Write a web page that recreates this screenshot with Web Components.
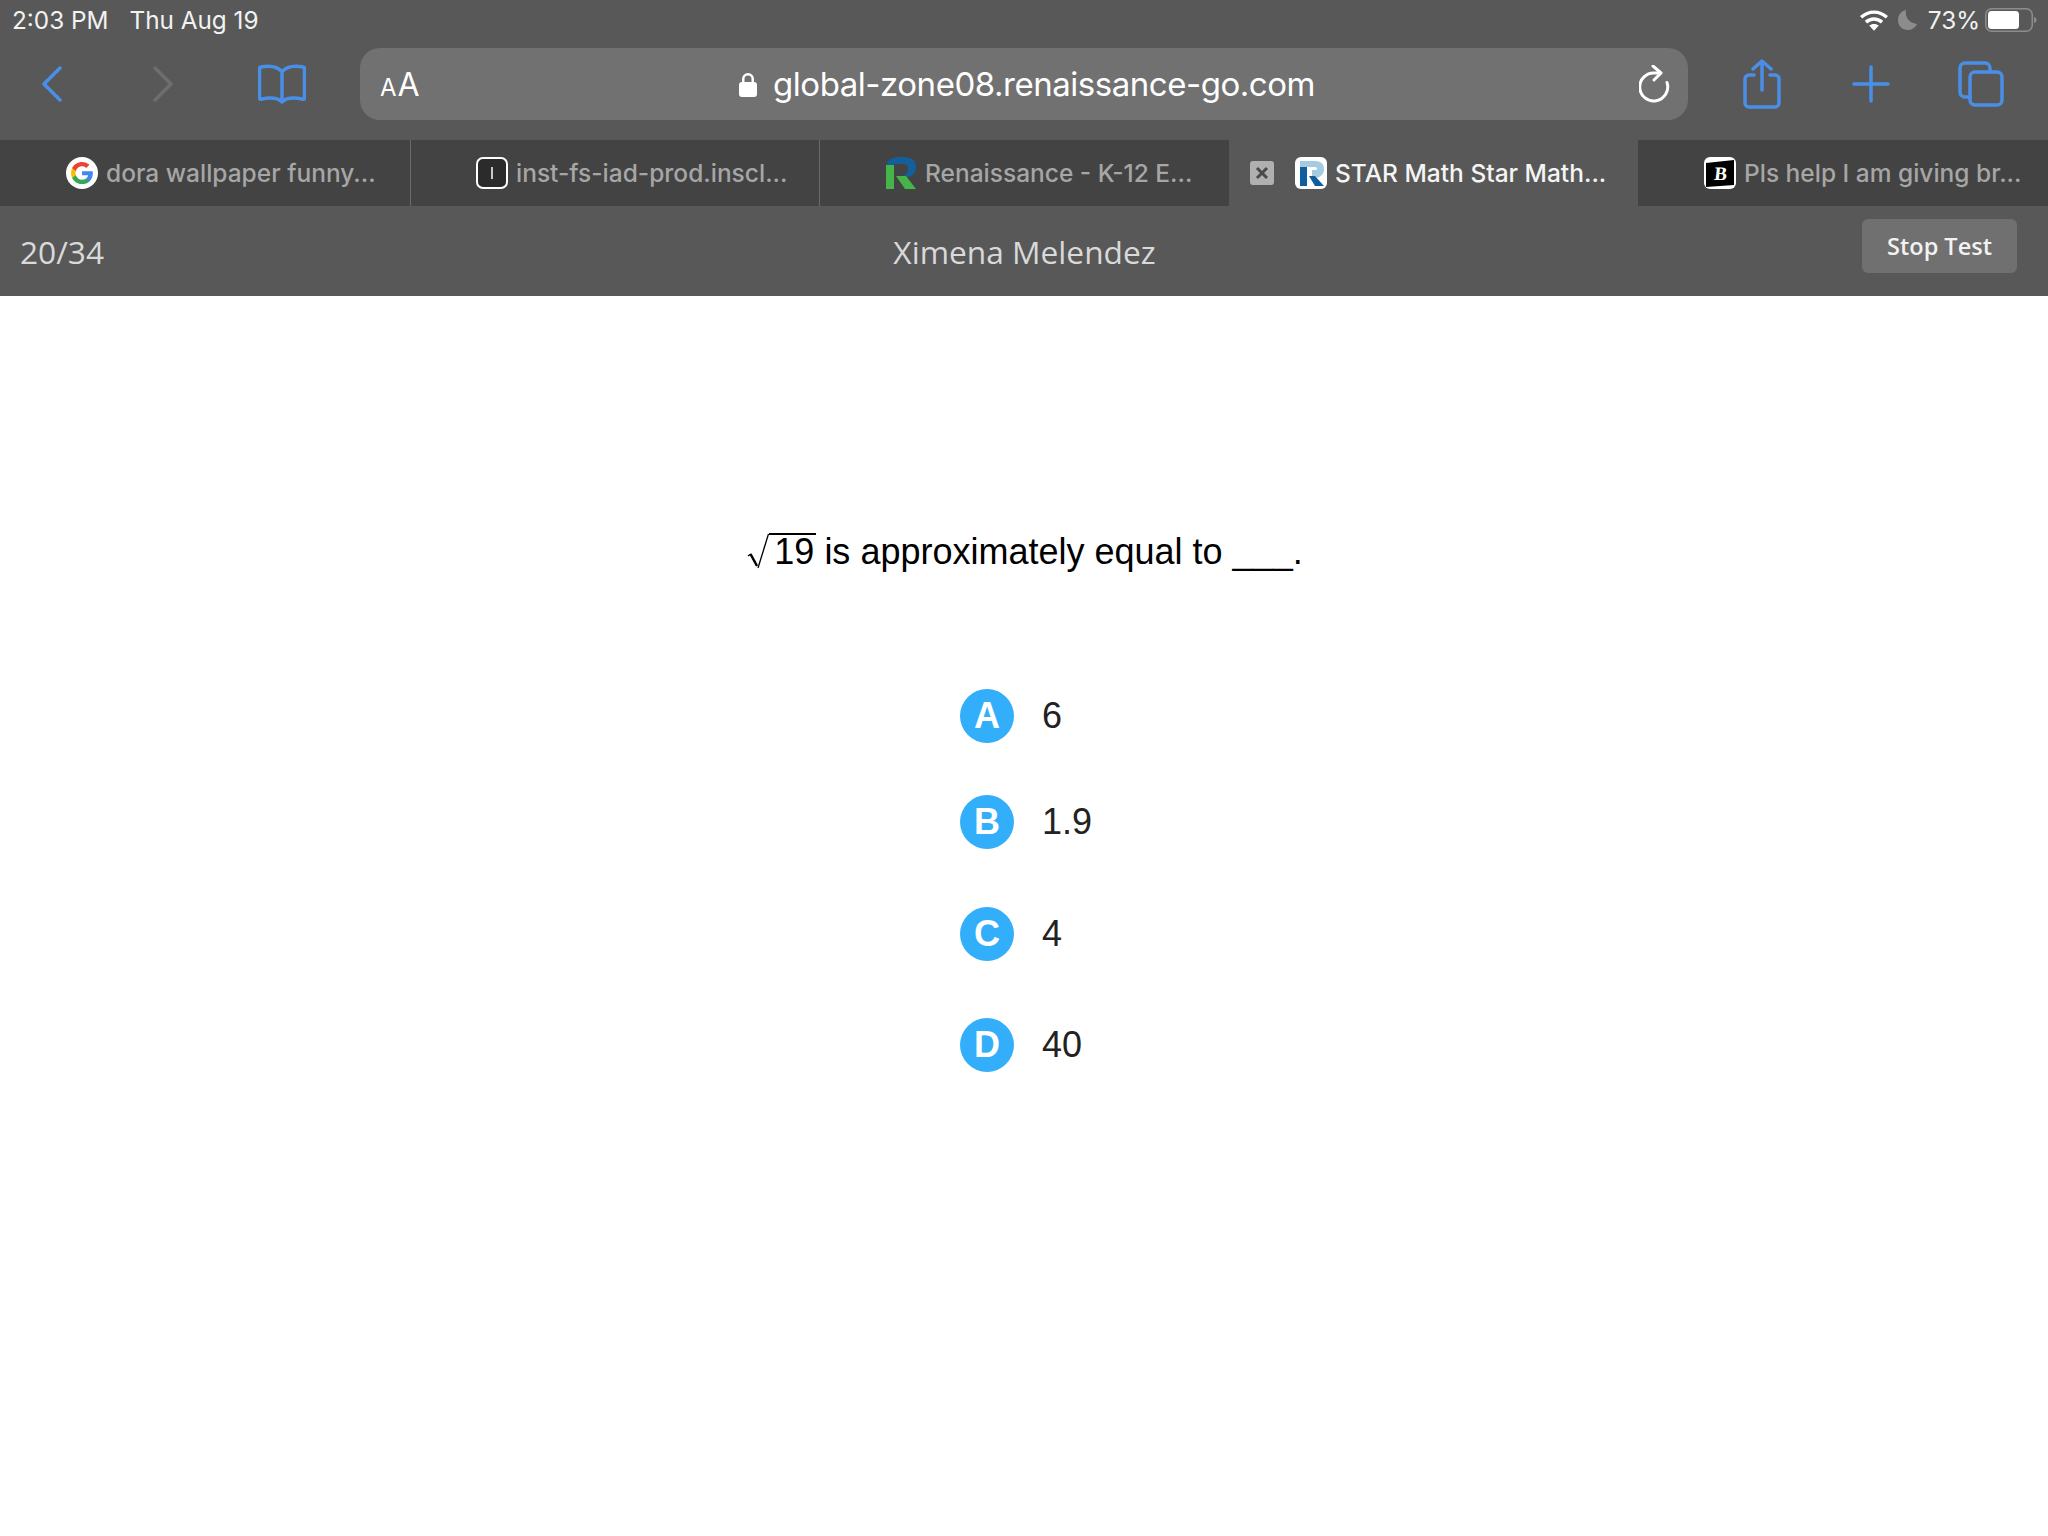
<!DOCTYPE html>
<html>
<head>
<meta charset="utf-8">
<title>Star Math</title>
<style>
    html, body { margin: 0; padding: 0; background: #fff; }
    body { width: 2048px; height: 1536px; overflow: hidden; font-family: "Liberation Sans", sans-serif; }
    .fav { width: 32px; height: 32px; display: block; }
</style>
</head>
<body>
<test-page>
    <status-bar slot="chrome" time="2:03 PM" date="Thu Aug 19" battery="73%"></status-bar>
    <browser-toolbar slot="chrome" url="global-zone08.renaissance-go.com"></browser-toolbar>
    <tab-strip slot="chrome">
        <tab-item label="dora wallpaper funny..." divider>
            <svg class="fav" viewBox="0 0 32 32"><circle cx="16" cy="16" r="16" fill="#fff"/><g transform="translate(5 5) scale(.46)"><path fill="#4285F4" d="M47.5 24.6c0-1.6-.1-3.1-.4-4.6H24v9h13.2c-.6 3-2.3 5.6-4.9 7.3v6h7.9c4.6-4.3 7.3-10.6 7.3-17.7z"/><path fill="#34A853" d="M24 48c6.5 0 11.9-2.1 15.9-5.800l-7.900-6c-2.200 1.500-5 2.300-8 2.300-6.300 0-11.600-4.200-13.500-9.900H2.400v6.200C6.300 42.600 14.500 48 24 48z"/><path fill="#FBBC05" d="M10.500 28.600c-.5-1.500-.8-3-.8-4.600s.3-3.100.8-4.600v-6.200H2.400C.9 16.500 0 20.100 0 24s.9 7.500 2.400 10.800z"/><path fill="#EA4335" d="M24 9.500c3.500 0 6.700 1.200 9.200 3.600l6.900-6.900C35.900 2.400 30.500 0 24 0 14.500 0 6.300 5.400 2.400 13.200l8.100 6.200C12.400 13.700 17.700 9.500 24 9.500z"/></g></svg>
        </tab-item>
        <tab-item label="inst-fs-iad-prod.inscl..." divider style="padding-left:65px">
            <svg class="fav" viewBox="0 0 32 32"><rect x="1" y="1" width="30" height="30" rx="6" fill="#2b2b2b" stroke="#fff" stroke-width="2"/><rect x="15.200" y="10" width="1.600" height="12" fill="#eee"/></svg>
        </tab-item>
        <tab-item label="Renaissance - K-12 E..." style="padding-left:65px">
            <svg class="fav" viewBox="0 0 32 32"><path fill="#145f99" d="M1 10C2 3 7 0 14 0h5c8 0 12 4 12 10s-3 9-8 10l-7-1c4 0 7-3 7-8 0-3-2-4-6-4H9v4z"/><rect x="1" y="8" width="8" height="24" fill="#46b549"/><path fill="#46b549" d="M11 19h10l10 13H20z"/></svg>
        </tab-item>
        <tab-item label="STAR Math Star Math..." active>
            <svg class="fav" viewBox="0 0 32 32"><rect width="32" height="32" rx="6" fill="#fff"/><path fill="#a5cbe3" d="M5 4h15c6 0 9 3 9 8s-3 8-8 9l-3-1h-1v-7h2c2 0 3-.500 3-1.500 0-1-1-1.500-3-1.500H5z"/><rect x="5" y="10" width="7" height="19" fill="#0f5f9e"/><path fill="#0f5f9e" d="M14 19h6l9 10h-9z"/></svg>
        </tab-item>
        <tab-item label="Pls help I am giving br...">
            <svg class="fav" viewBox="0 0 32 32"><rect width="32" height="32" rx="6" fill="#fff"/><path d="M2 6 30 3v25L2 30z" fill="#000"/><text x="16" y="23" text-anchor="middle" font-family="Liberation Serif" font-weight="700" font-size="19" fill="#fff" transform="skewX(-6) translate(2.500 0)">B</text></svg>
        </tab-item>
    </tab-strip>
    <test-header slot="chrome" progress="20/34" student="Ximena Melendez" action="Stop Test"></test-header>

    <question-prompt>is approximately equal to ___.</question-prompt>
    <answer-option letter="A" gap="0">6</answer-option>
    <answer-option letter="B" gap="52">1.9</answer-option>
    <answer-option letter="C" gap="58">4</answer-option>
    <answer-option letter="D" gap="57">40</answer-option>
</test-page>

<script>
// iOS status row
class StatusBar extends HTMLElement {
    constructor() {
        super();
        const shadow = this.attachShadow({ mode: 'open' });
        shadow.innerHTML = `
        <style>
            :host {
                display: flex;
                align-items: center;
                height: 40px;
                padding: 0 11px 0 12px;
                color: #f2f2f2;
                font: 400 24.300px Inter, "Liberation Sans", sans-serif;
            }
            #date { margin-left: 21px; }
            #right { margin-left: auto; display: flex; align-items: center; }
            #pct { margin: 0 5px 0 10px; }
            svg { display: block; }
        </style>
        <span>${this.getAttribute('time')}</span>
        <span id="date">${this.getAttribute('date')}</span>
        <div id="right">
            <svg width="30" height="22" viewBox="0 0 28 20" style="margin-right:9px"><path fill="none" stroke="#fff" stroke-width="3.200" d="M2 7.500C9 1 19 1 26 7.500M6.500 12c4.500-4 10.500-4 15 0"/><path fill="#fff" d="M14 20l-4.500-4.800c2.500-2 6.500-2 9 0z"/></svg>
            <svg width="20" height="20" viewBox="0 0 20 20"><path fill="#8c8c8c" d="M8 0c-1 6 2 13 11 14-2 4-6 6-9 6C4 20 0 16 0 10 0 5 3 1 8 0z"/></svg>
            <span id="pct">${this.getAttribute('battery')}</span>
            <svg width="52" height="24" viewBox="0 0 52 24"><rect x=".75" y=".75" width="46.500" height="22.500" rx="6" fill="none" stroke="#8d8d8d" stroke-width="1.500"/><rect x="3" y="3" width="31" height="18" rx="3.500" fill="#fff"/><path d="M49 9c2 .5 2.500 1.500 2.500 3s-.5 2.500-2.500 3z" fill="#8d8d8d"/></svg>
        </div>`;
    }
}
customElements.define('status-bar', StatusBar);

// back/forward/reader, address field, share/new/tabs
class BrowserToolbar extends HTMLElement {
    constructor() {
        super();
        const shadow = this.attachShadow({ mode: 'open' });
        shadow.innerHTML = `
        <style>
            :host {
                display: flex;
                align-items: center;
                height: 100px;
                box-sizing: border-box;
                padding: 8px 0 20px 0;
            }
            svg { display: block; flex: none; fill: none; stroke: #4a8fe7; stroke-width: 3.500; stroke-linecap: round; stroke-linejoin: round; }
            #field {
                flex: none;
                box-sizing: border-box;
                width: 1328px;
                height: 72px;
                margin-left: 54px;
                padding: 0 17px 0 20px;
                border-radius: 20px;
                background: #717171;
                display: grid;
                grid-template-columns: 1fr auto 1fr;
                align-items: center;
                color: #fff;
                font: 400 33px Inter, "Liberation Sans", sans-serif;
                letter-spacing: -.47px;
            }
            #aa { font-size: 32px; letter-spacing: 1px; line-height: 1; padding-top: 2px; }
            #aa small { font-size: 24px; }
            #url { display: flex; align-items: center; gap: 16px; padding-left: 3px; }
            #reload { justify-self: end; stroke: #fff; }
        </style>
        <svg width="20" height="36" viewBox="0 0 20 36" style="margin-left:42px"><path d="M18 2 2 18l16 16"/></svg>
        <svg width="20" height="36" viewBox="0 0 20 36" style="margin-left:91px;stroke:#6e6e6e"><path d="m2 2 16 16L2 34"/></svg>
        <svg width="48" height="40" viewBox="0 0 48 40" style="margin-left:85px"><path d="M24 8C20 3 12 1.500 3 3c-1 0-1.500 1-1.500 2v29c0 1 .8 1.500 1.500 1.200C11 33.500 19 33 24 38c5-5 13-4.500 21-2.800 .7.300 1.500-.2 1.500-1.200V5c0-1-.5-2-1.500-2C36 1.500 28 3 24 8zM24 8v30"/></svg>
        <div id="field">
            <span id="aa"><small>A</small>A</span>
            <span id="url">
                <svg width="18" height="25" viewBox="0 0 18 25" style="stroke:none;fill:#fff"><path d="M3 11V7a6 6 0 0 1 12 0v4h-2.500V7a3.500 3.500 0 0 0-7 0v4z"/><rect y="10" width="18" height="15" rx="3"/></svg>
                <span>${this.getAttribute('url')}</span>
            </span>
            <svg id="reload" width="32" height="38" viewBox="0 0 32 38"><path stroke-width="3" d="M28 17.500A14 14 0 1 1 16 8h5"/><path stroke-width="3" d="m14 1 8 7-7 7"/></svg>
        </div>
        <svg width="40" height="50" viewBox="0 0 40 50" style="margin-left:54px"><path d="M12 16H7a4 4 0 0 0-4 4v24a4 4 0 0 0 4 4h26a4 4 0 0 0 4-4V20a4 4 0 0 0-4-4h-5M20 31V2M11 10l9-8 9 8"/></svg>
        <svg width="38" height="38" viewBox="0 0 38 38" style="margin-left:70px"><path d="M19 2v34M2 19h34"/></svg>
        <svg width="46" height="46" viewBox="0 0 46 46" style="margin-left:68px"><path d="M12 36H7a5 5 0 0 1-5-5V7a5 5 0 0 1 5-5h20a5 5 0 0 1 5 5v4"/><rect x="12" y="11" width="32" height="33" rx="5"/></svg>`;
    }
}
customElements.define('browser-toolbar', BrowserToolbar);

class TabStrip extends HTMLElement {
    constructor() {
        super();
        const shadow = this.attachShadow({ mode: 'open' });
        shadow.innerHTML = `
        <style>
            :host {
                display: grid;
                grid-template-columns: 411px 409px 409px 409px 410px;
                height: 66px;
                background: #434343;
            }
        </style>
        <slot></slot>`;
    }
}
customElements.define('tab-strip', TabStrip);

class TabItem extends HTMLElement {
    constructor() {
        super();
        const shadow = this.attachShadow({ mode: 'open' });
        const active = this.hasAttribute('active');
        shadow.innerHTML = `
        <style>
            :host {
                display: flex;
                align-items: center;
                box-sizing: border-box;
                min-width: 0;
                padding-left: ${active ? 21 : 66}px;
                color: ${active ? '#f4f4f4' : '#a6a6a6'};
                background: ${active ? '#585858' : 'transparent'};
                border-right: ${this.hasAttribute('divider') ? '1px solid #6a6a6a' : 'none'};
                font: 500 24.500px Inter, "Liberation Sans", sans-serif;
                white-space: nowrap;
            }
            #close {
                width: 24px;
                height: 24px;
                margin-right: 21px;
                flex: none;
                background: #b0b0b0;
                border-radius: 3px;
            }
            #close svg { display: block; }
            #label { margin-left: 8px; }
        </style>
        ${active ? '<div id="close"><svg width="24" height="24" viewBox="0 0 24 24"><path d="m7 7 10 10M17 7 7 17" stroke="#4a4a4a" stroke-width="3"/></svg></div>' : ''}
        <slot></slot>
        <span id="label">${this.getAttribute('label')}</span>`;
    }
}
customElements.define('tab-item', TabItem);

class TestHeader extends HTMLElement {
    constructor() {
        super();
        const shadow = this.attachShadow({ mode: 'open' });
        shadow.innerHTML = `
        <style>
            :host {
                display: grid;
                grid-template-columns: 1fr auto 1fr;
                align-items: center;
                box-sizing: border-box;
                height: 90px;
                padding: 0 31px 0 20px;
                color: #d9d9d9;
                font: 400 31.700px "Open Sans", "Noto Sans", sans-serif;
            }
            #name { margin-left: 12px; }
            button {
                justify-self: end;
                width: 155px;
                height: 54px;
                margin-top: -10px;
                border: 0;
                border-radius: 6px;
                background: #707070;
                color: #f2f2f2;
                font: 600 23.500px "Open Sans", "Noto Sans", sans-serif;
            }
        </style>
        <span>${this.getAttribute('progress')}</span>
        <span id="name">${this.getAttribute('student')}</span>
        <button>${this.getAttribute('action')}</button>`;
    }
}
customElements.define('test-header', TestHeader);

class QuestionPrompt extends HTMLElement {
    constructor() {
        super();
        const shadow = this.attachShadow({ mode: 'open' });
        shadow.innerHTML = `
        <style>
            :host {
                display: flex;
                align-items: baseline;
                justify-content: center;
                color: #000;
                font: 400 36px/44px "Liberation Sans", sans-serif;
                white-space: pre;
            }
            #root { display: inline-flex; align-items: baseline; }
            #root svg { display: block; overflow: visible; }
            #radicand { border-top: 2px solid #000; line-height: 34px; padding: 0 2px 0 5px; margin-right: 8px; }
        </style>
        <span id="root">
            <svg width="22" height="30" viewBox="0 0 22 30"><path fill="none" stroke="#000" stroke-width="1.500" d="M1 22l3-2"/><path fill="none" stroke="#000" stroke-width="2.500" d="M3.500 20 10 32"/><path fill="none" stroke="#000" stroke-width="1.300" d="M11 34 21.500 0"/></svg>
            <span id="radicand">19</span>
        </span>
        <slot></slot>`;
    }
}
customElements.define('question-prompt', QuestionPrompt);

class AnswerOption extends HTMLElement {
    constructor() {
        super();
        const shadow = this.attachShadow({ mode: 'open' });
        shadow.innerHTML = `
        <style>
            :host {
                display: flex;
                align-items: center;
                gap: 28px;
                width: 300px;
                margin-top: ${this.getAttribute('gap') || 0}px;
                color: #222;
                font: 400 36px "Liberation Sans", sans-serif;
            }
            #letter {
                flex: none;
                width: 54px;
                height: 54px;
                border-radius: 50%;
                background: #32aefa;
                color: #fff;
                display: flex;
                align-items: center;
                justify-content: center;
                font-weight: 700;
                font-size: 36px;
            }
        </style>
        <span id="letter">${this.getAttribute('letter')}</span>
        <span><slot></slot></span>`;
    }
}
customElements.define('answer-option', AnswerOption);

class TestPage extends HTMLElement {
    constructor() {
        super();
        const shadow = this.attachShadow({ mode: 'open' });
        shadow.innerHTML = `
        <style>
            :host { display: block; height: 1536px; background: #fff; }
            header { background: #585858; height: 296px; overflow: hidden; }
            main { display: flex; flex-direction: column; }
            #prompt { padding-top: 234px; padding-left: 2px; }
            #options { margin: 115px 0 0 960px; }
        </style>
        <header><slot name="chrome"></slot></header>
        <main>
            <div id="prompt"><slot name="prompt"></slot></div>
            <div id="options"><slot></slot></div>
        </main>`;
        // the prompt goes in its own slot, ahead of the options
        this.querySelector('question-prompt').setAttribute('slot', 'prompt');
    }
}
customElements.define('test-page', TestPage);
</script>
</body>
</html>
